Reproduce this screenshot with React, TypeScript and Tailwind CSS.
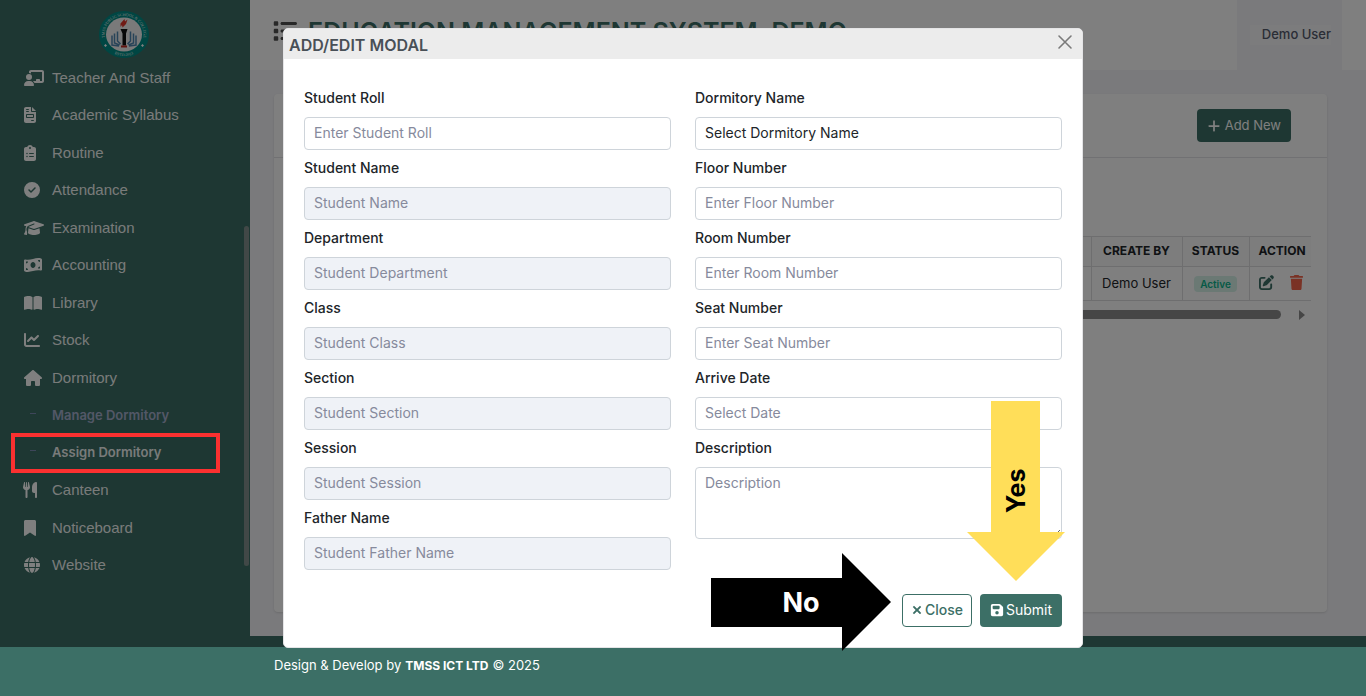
import type { ReactNode } from "react";
import type { IconType } from "react-icons";
import {
  FaBookmark,
  FaBookOpen,
  FaChalkboardUser,
  FaChartLine,
  FaCircleCheck,
  FaClipboardList,
  FaFileInvoice,
  FaFloppyDisk,
  FaGlobe,
  FaGraduationCap,
  FaHouse,
  FaList,
  FaMoneyBillWave,
  FaPenToSquare,
  FaPlus,
  FaTrash,
  FaUtensils,
  FaXmark,
} from "react-icons/fa6";

type NavItem = { label: string; icon?: IconType; iconClass?: string; active?: boolean };

// Icon boxes are sized by glyph shape: extra wide, wide, square and narrow.
const navItems: NavItem[] = [
  { label: "Teacher And Staff", icon: FaChalkboardUser, iconClass: "size-5" },
  { label: "Academic Syllabus", icon: FaFileInvoice, iconClass: "-ml-0.5 size-4" },
  { label: "Routine", icon: FaClipboardList, iconClass: "-ml-0.5 size-4" },
  { label: "Attendance", icon: FaCircleCheck, iconClass: "size-4" },
  { label: "Examination", icon: FaGraduationCap, iconClass: "size-5" },
  { label: "Accounting", icon: FaMoneyBillWave, iconClass: "size-[18px]" },
  { label: "Library", icon: FaBookOpen, iconClass: "size-[18px]" },
  { label: "Stock", icon: FaChartLine, iconClass: "size-4" },
  { label: "Dormitory", icon: FaHouse, iconClass: "size-[18px]" },
  { label: "Manage Dormitory" },
  { label: "Assign Dormitory", active: true },
  { label: "Canteen", icon: FaUtensils, iconClass: "-ml-0.5 size-4" },
  { label: "Noticeboard", icon: FaBookmark, iconClass: "-ml-0.5 size-4" },
  { label: "Website", icon: FaGlobe, iconClass: "size-4" },
];

function Logo() {
  return (
    <svg viewBox="0 0 100 94" className="h-[47px] w-[50px]" role="img" aria-label="School logo">
      <defs>
        <path id="ringTop" d="M14.7 62.6 A39 37 0 1 1 85.3 62.6" />
        <path id="ringBottom" d="M21 80 A45 43 0 0 0 79 80" />
      </defs>
      <ellipse cx="50" cy="47" rx="50" ry="47" fill="#008c86" />
      <ellipse cx="50" cy="47" rx="36" ry="34" fill="#f4f4f4" />
      <text fill="#e8f4f2" fontSize="8" fontFamily="Liberation Serif, serif">
        <textPath href="#ringTop" startOffset="50%" textAnchor="middle">
          TMSS PUBLIC SCHOOL &amp; COLLEGE
        </textPath>
      </text>
      <text fill="#e8f4f2" fontSize="8" fontFamily="Liberation Serif, serif">
        <textPath href="#ringBottom" startOffset="50%" textAnchor="middle">
          ESTD-2013
        </textPath>
      </text>
      <path d="M13 66l3 3-3 3-3-3zM87 66l3 3-3 3-3-3z" fill="#fff" />
      <path d="M43 25l8-9 1 5 5-4-3 9-7 7-1-5-3 4z" fill="#e0352b" />
      <path d="M43 36h14l-3 9v24h-7V45z" fill="#111" />
      <path d="M44 69h12v4H44z" fill="#c62c25" />
      <path d="M26 49v19l14 2M31 45v19l10 4M37 41v19l6 6" fill="none" stroke="#4f86b0" strokeWidth="3" />
      <path d="M74 49v19l-14 2M69 45v19l-10 4M63 41v19l-6 6" fill="none" stroke="#4f86b0" strokeWidth="3" />
    </svg>
  );
}

function Sidebar() {
  return (
    <aside className="relative w-[250px] shrink-0 bg-[#3c6f66]">
      <div className="flex h-[59px] items-end justify-center pr-0.5 pb-px">
        <Logo />
      </div>
      <nav className="grid h-[525px] auto-rows-fr">
        {navItems.map(({ label, icon: Icon, iconClass, active }) => (
          <a key={label} href="#" className="flex items-center pl-6">
            {Icon ? (
              <>
                <span className="w-7 text-white">
                  <Icon className={iconClass} />
                </span>
                <span className="font-['Liberation_Sans',sans-serif] text-[15px] text-white/95">{label}</span>
              </>
            ) : (
              <>
                <span className="w-7 pl-1.5">
                  <span className="mb-1 block h-px w-1.5 bg-[#7d8cb5]" />
                </span>
                <span
                  className={
                    active
                      ? "text-[13px] font-semibold text-white/95"
                      : "text-[13px] font-semibold text-[#a6b0cf]"
                  }
                >
                  {label}
                </span>
              </>
            )}
          </a>
        ))}
      </nav>
      <div className="absolute top-[226px] right-px h-[340px] w-[5px] rounded-full bg-[#83918e]" />
    </aside>
  );
}

function RecordsTable() {
  const cell = "border border-r-0 border-[#dcdcde]";
  return (
    <table className="w-full table-fixed border-collapse text-[13px] text-[#212529]">
      <colgroup>
        <col />
        <col className="w-[91px]" />
        <col className="w-[67px]" />
        <col className="w-[62px]" />
      </colgroup>
      <thead>
        <tr className="h-[30px] bg-[#fafafa] text-xs">
          <td className={cell} />
          <th className={`${cell} pb-0.5`}>CREATE BY</th>
          <th className={`${cell} pb-0.5`}>STATUS</th>
          <th className={`${cell} pb-0.5 pl-[9px] text-left`}>ACTION</th>
        </tr>
      </thead>
      <tbody>
        <tr className="h-[34px]">
          <td className={cell} />
          <td className={`${cell} text-center`}>Demo User</td>
          <td className={`${cell} text-center`}>
            <span className="rounded bg-[#d6f3e9] px-1.5 py-0.5 text-[10px] font-semibold text-[#0bb48c]">
              Active
            </span>
          </td>
          <td className={cell}>
            <div className="flex items-center justify-between pr-[7px] pb-0.5 pl-[9px] text-[15px]">
              <button type="button" aria-label="Edit" className="text-[#3c6f66]">
                <FaPenToSquare />
              </button>
              <button type="button" aria-label="Delete" className="text-[#f4654a]">
                <FaTrash />
              </button>
            </div>
          </td>
        </tr>
      </tbody>
    </table>
  );
}

function Page() {
  return (
    <div className="flex min-w-0 flex-1 flex-col">
      <header className="flex h-[70px] items-stretch bg-white pr-6">
        <div className="flex flex-1 items-center gap-[11px] pb-2 pl-[23px]">
          <button type="button" aria-label="Toggle menu" className="text-2xl text-[#505050]">
            <FaList />
          </button>
          <h1 className="pt-1 text-[25px] font-semibold whitespace-nowrap text-[#3c6f66]">
            EDUCATION MANAGEMENT SYSTEM, DEMO
          </h1>
        </div>
        <div className="flex w-[105px] items-center justify-end bg-[#f5f5f9] pr-[11px]">
          <button
            type="button"
            className="bg-[#f9f9fb] pl-3 text-[13px] font-medium whitespace-nowrap text-[#555b6d]"
          >
            Demo User
          </button>
        </div>
      </header>
      <main className="flex-1 bg-[#f5f5f9] py-6 pr-[39px] pl-6">
        <section className="h-full rounded bg-white shadow-sm">
          <div className="flex h-16 items-center justify-end border-b border-[#e2e2e6] pr-9">
            <button
              type="button"
              className="flex h-[33px] items-center gap-1 rounded bg-[#3c6f66] px-2.5 text-[13px] text-white"
            >
              <FaPlus className="text-sm" />
              Add New
            </button>
          </div>
          <div className="px-4 pt-[78px]">
            <RecordsTable />
            <div className="mt-2 flex h-[11px] items-center justify-between pr-1.5">
              <div className="mr-[18px] h-[9px] flex-1 rounded-full bg-[#8c8c8c]" />
              <svg viewBox="0 0 6 10" className="h-2.5 w-1.5" fill="#8c8c8c">
                <path d="M0 0l6 5-6 5z" />
              </svg>
            </div>
          </div>
        </section>
      </main>
      <footer className="flex h-[60px] items-center gap-1 bg-[#3c6f66] pl-6 text-[13px] text-white">
        <span>Design &amp; Develop by</span>
        <strong className="text-xs">TMSS ICT LTD</strong>
        <span>© 2025</span>
      </footer>
    </div>
  );
}

function Field({ id, label, children }: { id: string; label: string; children: ReactNode }) {
  return (
    <div className="flex flex-col gap-2">
      <label htmlFor={id} className="h-[21px] text-sm leading-5 font-medium text-[#212529]">
        {label}
      </label>
      {children}
    </div>
  );
}

const control =
  "w-full rounded border border-[#ced4da] px-[9px] text-sm placeholder:text-[#868a9c] placeholder:opacity-100";

const studentFields = [
  { id: "roll", label: "Student Roll", hint: "Enter Student Roll", disabled: false },
  { id: "name", label: "Student Name", hint: "Student Name", disabled: true },
  { id: "department", label: "Department", hint: "Student Department", disabled: true },
  { id: "class", label: "Class", hint: "Student Class", disabled: true },
  { id: "section", label: "Section", hint: "Student Section", disabled: true },
  { id: "session", label: "Session", hint: "Student Session", disabled: true },
  { id: "father", label: "Father Name", hint: "Student Father Name", disabled: true },
];

const roomFields = [
  { id: "floor", label: "Floor Number", hint: "Enter Floor Number" },
  { id: "room", label: "Room Number", hint: "Enter Room Number" },
  { id: "seat", label: "Seat Number", hint: "Enter Seat Number" },
  { id: "arrive", label: "Arrive Date", hint: "Select Date" },
];

function Modal() {
  return (
    <div
      role="dialog"
      aria-labelledby="modal-title"
      className="relative w-[800px] max-w-full self-start rounded-[5px] border border-[#e4e4e6] bg-white"
    >
      <header className="flex h-[30px] items-center justify-between rounded-t bg-[#ececec] pr-[9px] pl-[5px]">
        <h2 id="modal-title" className="pt-0.5 text-base font-semibold text-[#495057]">
          ADD/EDIT MODAL
        </h2>
        <button type="button" aria-label="Close dialog" className="pb-1 text-[#7a7a7a]">
          <svg viewBox="0 0 16 16" className="size-4" fill="none" stroke="currentColor" strokeWidth="1.6" strokeLinecap="round">
            <path d="M2 2l12 12M14 2L2 14" />
          </svg>
        </button>
      </header>
      <form className="px-5 pt-[29px] pb-5" onSubmit={(e) => e.preventDefault()}>
        <div className="grid grid-cols-2 gap-6">
          <div className="flex flex-col gap-2">
            {studentFields.map((f) => (
              <Field key={f.id} id={f.id} label={f.label}>
                <input
                  id={f.id}
                  placeholder={f.hint}
                  disabled={f.disabled}
                  className={`${control} h-[33px] pb-0.5 disabled:bg-[#eff2f7]`}
                />
              </Field>
            ))}
          </div>
          <div className="flex flex-col gap-2">
            <Field id="dormitory" label="Dormitory Name">
              <select id="dormitory" className={`${control} h-[33px] appearance-none pb-0.5 text-[#212529]`}>
                <option>Select Dormitory Name</option>
              </select>
            </Field>
            {roomFields.map((f) => (
              <Field key={f.id} id={f.id} label={f.label}>
                <input id={f.id} placeholder={f.hint} className={`${control} h-[33px] pb-0.5`} />
              </Field>
            ))}
            <Field id="description" label="Description">
              <textarea
                id="description"
                placeholder="Description"
                className={`${control} h-[72px] resize-y py-[5px]`}
              />
            </Field>
          </div>
        </div>
        <div className="flex justify-end gap-2 pt-6">
          <button
            type="button"
            className="flex h-[33px] items-center gap-0.5 rounded border border-[#3c6f66] px-2 pb-0.5 text-sm font-medium text-[#3c6f66]"
          >
            <FaXmark className="text-xs" strokeWidth="24" stroke="currentColor" />
            Close
          </button>
          <button
            type="submit"
            className="flex h-[33px] items-center gap-0.5 rounded bg-[#3c6f66] px-2.5 pb-0.5 text-sm text-white"
          >
            <FaFloppyDisk />
            Submit
          </button>
        </div>
      </form>
    </div>
  );
}

function Annotations() {
  return (
    <>
      <div className="absolute top-[433px] left-[11px] h-[40px] w-[209px] border-4 border-[#fb3030]" />
      <div className="absolute top-[553px] left-1/2 ml-[28px] h-[98px] w-[180px]">
        <svg viewBox="0 0 180 98" className="absolute inset-0 size-full" fill="#000">
          <path d="M0 25h131V0l49 49-49 49V74H0z" />
        </svg>
        <span className="absolute inset-0 flex items-center justify-center pt-0.5 text-[27px] font-bold text-white">
          No
        </span>
      </div>
      <div className="absolute top-[401px] left-1/2 ml-[284px] h-[180px] w-[98px]">
        <svg viewBox="0 0 98 180" className="absolute inset-0 size-full" fill="#ffde59">
          <path d="M24 0h49v131h25l-49 49-49-49h24z" />
        </svg>
        <span className="absolute inset-0 flex items-center justify-center pl-0.5">
          <span className="-rotate-90 text-[25px] font-bold text-black">Yes</span>
        </span>
      </div>
    </>
  );
}

export default function App() {
  return (
    <div className="relative flex min-h-screen overflow-hidden font-['Inter',sans-serif]">
      <Sidebar />
      <Page />
      <div className="absolute inset-x-0 top-0 bottom-[49px] bg-black/50" />
      <div className="absolute inset-x-0 top-7 flex justify-center">
        <Modal />
      </div>
      <Annotations />
    </div>
  );
}
